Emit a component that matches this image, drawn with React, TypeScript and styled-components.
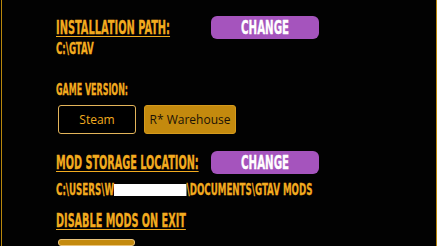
import React from 'react';
import styled, { createGlobalStyle } from 'styled-components';

const Global = createGlobalStyle`
  html, body {
    margin: 0;
    padding: 0;
    background: #000000;
  }
`;

const GOLD = '#f2ab1f';

const Frame = styled.div`
  box-sizing: border-box;
  width: 436px;
  height: 246px;
  margin-left: 1px;
  border-left: 1px solid #b8860b;
  border-right: 1px solid #b8860b;
  background: #020202;
  padding: 16px 0 0 54px;
  display: flex;
  flex-direction: column;
  overflow: hidden;
`;

const Row = styled.div<{ $top?: number }>`
  display: flex;
  align-items: center;
  margin-top: ${p => p.$top ?? 0}px;
`;

const LabelBox = styled.div<{ $width?: number }>`
  width: ${p => (p.$width ? `${p.$width}px` : 'auto')};
  flex-shrink: 0;
`;

// condensed display type, squeezed horizontally to the width of the original face
const Condensed = styled.span<{ $size: number; $underline?: boolean; $scale?: number }>`
  display: inline-block;
  font-family: 'DejaVu Sans Condensed', 'Liberation Sans', sans-serif;
  font-weight: 700;
  font-size: ${p => p.$size}px;
  line-height: 1;
  color: ${GOLD};
  -webkit-text-stroke: 0.3px ${GOLD};
  text-transform: uppercase;
  white-space: nowrap;
  transform: scaleX(${p => p.$scale ?? 0.55});
  transform-origin: left center;
  text-decoration: ${p => (p.$underline ? 'underline' : 'none')};
  text-decoration-thickness: 1px;
  text-underline-offset: 2px;
`;

const ChangeButton = styled.button`
  width: 108px;
  height: 23px;
  border: none;
  border-radius: 6px;
  background: #a554bd;
  color: #ffffff;
  padding: 0;
  display: flex;
  align-items: center;
  justify-content: center;
  cursor: pointer;
`;

const ChangeText = styled.span`
  display: inline-block;
  font-family: 'DejaVu Sans Condensed', 'Liberation Sans', sans-serif;
  font-weight: 700;
  font-size: 19px;
  line-height: 1;
  -webkit-text-stroke: 0.3px #ffffff;
  text-transform: uppercase;
  transform: scaleX(0.6);
`;

const PathLine = styled.div<{ $top: number }>`
  margin-top: ${p => p.$top}px;
  display: flex;
  align-items: center;
  height: 13px;
`;

const Redacted = styled.span`
  display: inline-block;
  width: 120px;
  height: 12px;
  background: #ffffff;
  vertical-align: middle;
`;

const VersionRow = styled.div`
  display: flex;
  gap: 8px;
  margin-top: 7px;
  margin-left: 2px;
`;

const VersionButton = styled.button<{ $active?: boolean; $width: number }>`
  box-sizing: border-box;
  width: ${p => p.$width}px;
  height: 29px;
  border-radius: 3px;
  border: 1px solid ${p => (p.$active ? '#d59a1c' : '#e3b45a')};
  box-shadow: ${p => (p.$active ? 'none' : 'inset 0 0 0 1px #000')};
  background: ${p => (p.$active ? '#c48a0e' : '#000000')};
  color: ${p => (p.$active ? '#1a1206' : GOLD)};
  font-family: 'Open Sans', 'Noto Sans', sans-serif;
  font-size: 12px;
  padding: 0;
  cursor: pointer;
`;

const ToggleButton = styled.button`
  box-sizing: border-box;
  width: 77px;
  height: 29px;
  margin-top: 9px;
  margin-left: 2px;
  border-radius: 3px;
  border: 1px solid #e8c27a;
  background: #c48a0e;
  padding: 0;
`;

export default function App() {
  return (
    <>
      <Global />
      <Frame>
        <Row>
          <LabelBox $width={155}>
            <Condensed $size={20} $underline $scale={0.547}>Installation Path:</Condensed>
          </LabelBox>
          <ChangeButton>
            <ChangeText>Change</ChangeText>
          </ChangeButton>
        </Row>
        <PathLine $top={3}>
          <Condensed $size={16} $scale={0.6}>C:\GTAV</Condensed>
        </PathLine>
        <Row $top={27}>
          <Condensed $size={16} $scale={0.554}>Game Version:</Condensed>
        </Row>
        <VersionRow>
          <VersionButton $width={78}>Steam</VersionButton>
          <VersionButton $width={92} $active>R* Warehouse</VersionButton>
        </VersionRow>
        <Row $top={17}>
          <LabelBox $width={155}>
            <Condensed $size={20} $underline $scale={0.54}>Mod Storage Location:</Condensed>
          </LabelBox>
          <ChangeButton>
            <ChangeText>Change</ChangeText>
          </ChangeButton>
        </Row>
        <PathLine $top={9}>
          <Condensed $size={16} $scale={0.604}>
            C:\Users\W<Redacted />\Documents\GTAV Mods
          </Condensed>
        </PathLine>
        <Row $top={14}>
          <Condensed $size={20} $underline $scale={0.538}>Disable Mods on Exit</Condensed>
        </Row>
        <ToggleButton />
      </Frame>
    </>
  );
}
